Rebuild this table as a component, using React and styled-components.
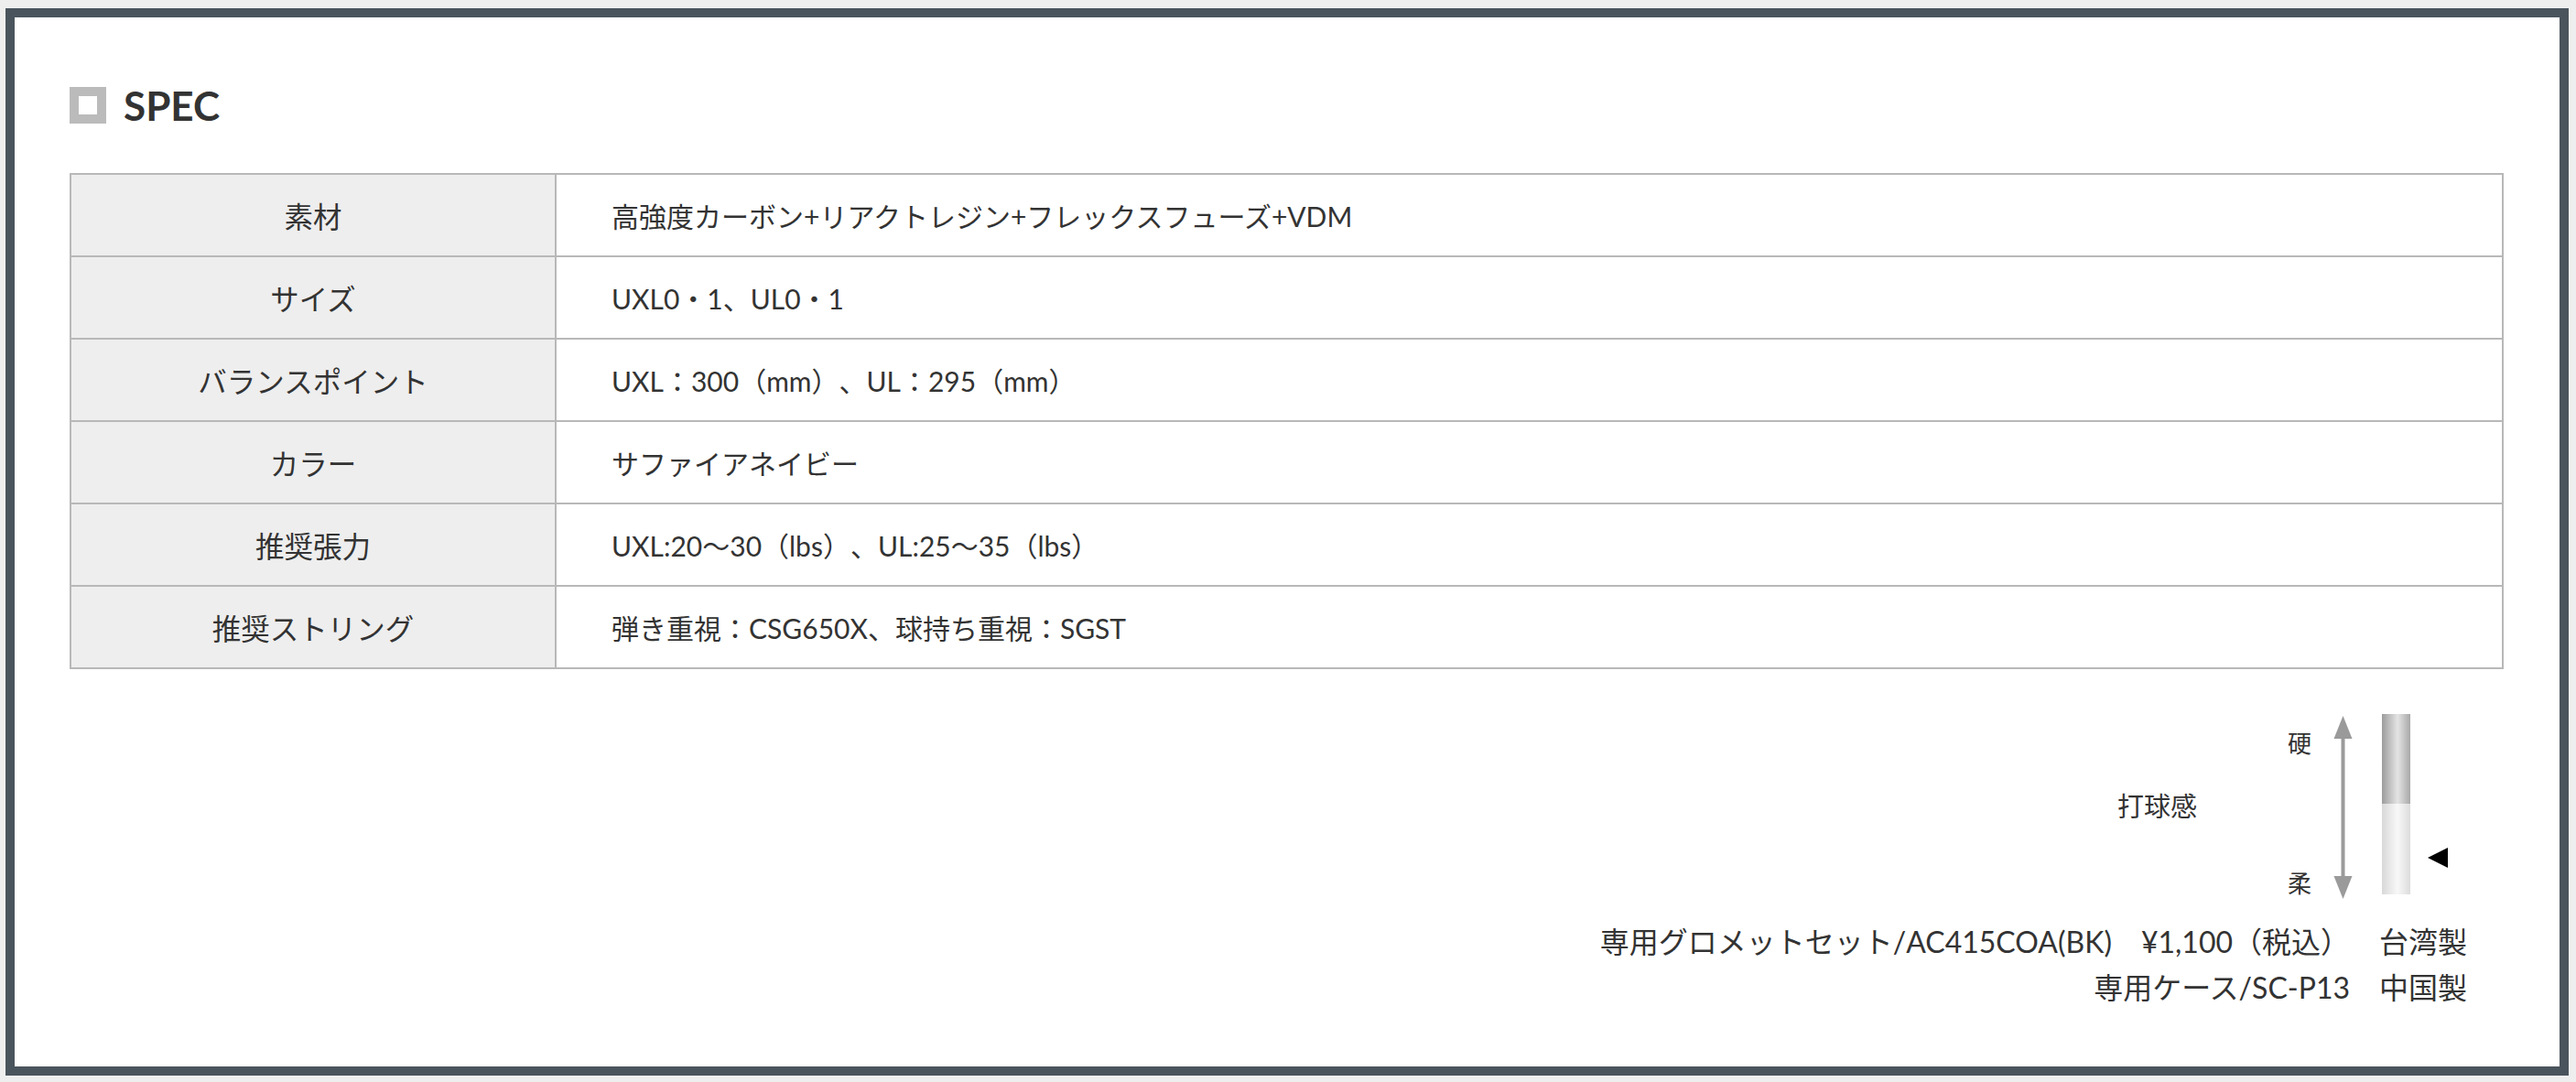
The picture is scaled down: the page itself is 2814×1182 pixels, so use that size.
import React from "react";
import styled, { createGlobalStyle } from "styled-components";

const Global = createGlobalStyle`
  html, body { margin: 0; padding: 0; background: #eeeeee; }
  body {
    font-family: "Lato", "Noto Sans CJK JP", sans-serif;
    color: #333;
    text-spacing-trim: space-all;
  }
`;

const Frame = styled.div`
  box-sizing: border-box;
  margin: 9px 8px 7px 6px;
  height: 1166px;
  border: 10px solid #4a545d;
  background: #fff;
  padding: 76px 61px 0 60px;
`;

const Title = styled.h2`
  display: flex;
  align-items: center;
  gap: 19px;
  margin: 0;
  height: 40px;
  font-family: "Lato", sans-serif;
  font-weight: 700;
  font-size: 44px;
  line-height: 1;
  color: #333;
`;

const TitleMark = styled.span`
  box-sizing: border-box;
  width: 40px;
  height: 40px;
  border: 10px solid #bbbbbb;
  background: #fff;
  flex: none;
`;

const Table = styled.div`
  margin-top: 54px;
  border: 2px solid #b8b8b8;
`;

const Row = styled.div`
  display: grid;
  grid-template-columns: 530px 1fr;
  height: 88px;
  & + & { border-top: 2px solid #b8b8b8; }
`;

const Label = styled.div`
  box-sizing: border-box;
  display: flex;
  align-items: center;
  justify-content: center;
  background: #eeeeee;
  border-right: 2px solid #b8b8b8;
  font-size: 31.5px;
  color: #333;
`;

const Value = styled.div`
  display: flex;
  align-items: center;
  padding-left: 60px;
  font-size: 30px;
  color: #333;
`;

const GaugeRow = styled.div`
  display: flex;
  justify-content: flex-end;
  padding-right: 60px;
  margin-top: 49px;
`;

const Notes = styled.div`
  margin-top: 19px;
  padding-right: 40px;
  text-align: right;
  font-size: 32px;
  line-height: 50px;
  color: #333;
`;

const Line = styled.div`
  white-space: pre;
`;

const specs = [
  ["素材", "高強度カーボン+リアクトレジン+フレックスフューズ+VDM"],
  ["サイズ", "UXL0・1、UL0・1"],
  ["バランスポイント", "UXL：300（mm）、UL：295（mm）"],
  ["カラー", "サファイアネイビー"],
  ["推奨張力", "UXL:20〜30（lbs）、UL:25〜35（lbs）"],
  ["推奨ストリング", "弾き重視：CSG650X、球持ち重視：SGST"],
];

function Gauge() {
  return (
    <svg width="362" height="205" viewBox="0 0 362 205">
      <defs>
        <linearGradient id="hard" x1="0" x2="1" y1="0" y2="0">
          <stop offset="0" stopColor="#9c9c9c" />
          <stop offset="0.55" stopColor="#e4e4e4" />
          <stop offset="1" stopColor="#a8a8a8" />
        </linearGradient>
        <linearGradient id="soft" x1="0" x2="1" y1="0" y2="0">
          <stop offset="0" stopColor="#d8d8d8" />
          <stop offset="0.55" stopColor="#f8f8f8" />
          <stop offset="1" stopColor="#dcdcdc" />
        </linearGradient>
      </defs>
      <text x="0" y="99" dominantBaseline="central" fontSize="29"
        fontFamily="'Noto Sans CJK JP', sans-serif" fill="#333">打球感</text>
      <text x="186" y="30" dominantBaseline="central" fontSize="26"
        fontFamily="'Noto Sans CJK JP', sans-serif" fill="#333">硬</text>
      <text x="186" y="183" dominantBaseline="central" fontSize="26"
        fontFamily="'Noto Sans CJK JP', sans-serif" fill="#333">柔</text>
      <line x1="246.5" y1="20" x2="246.5" y2="184" stroke="#9a9a9a" strokeWidth="4" />
      <polygon points="246.5,2 236.5,27 256.5,27" fill="#9a9a9a" />
      <polygon points="246.5,202 236.5,177 256.5,177" fill="#9a9a9a" />
      <rect x="289" y="0" width="31" height="98" fill="url(#hard)" />
      <rect x="289" y="98" width="31" height="99" fill="url(#soft)" />
      <polygon points="339,157 361,146 361,168" fill="#000" />
    </svg>
  );
}

export default function App() {
  return (
    <>
      <Global />
      <Frame>
        <Title>
          <TitleMark />
          SPEC
        </Title>
        <Table>
          {specs.map(([k, v]) => (
            <Row key={k}>
              <Label>{k}</Label>
              <Value>{v}</Value>
            </Row>
          ))}
        </Table>
        <GaugeRow>
          <Gauge />
        </GaugeRow>
        <Notes>
          <Line>{"専用グロメットセット/AC415COA(BK)　¥1,100（税込）　台湾製"}</Line>
          <Line>{"専用ケース/SC-P13　中国製"}</Line>
        </Notes>
      </Frame>
    </>
  );
}
